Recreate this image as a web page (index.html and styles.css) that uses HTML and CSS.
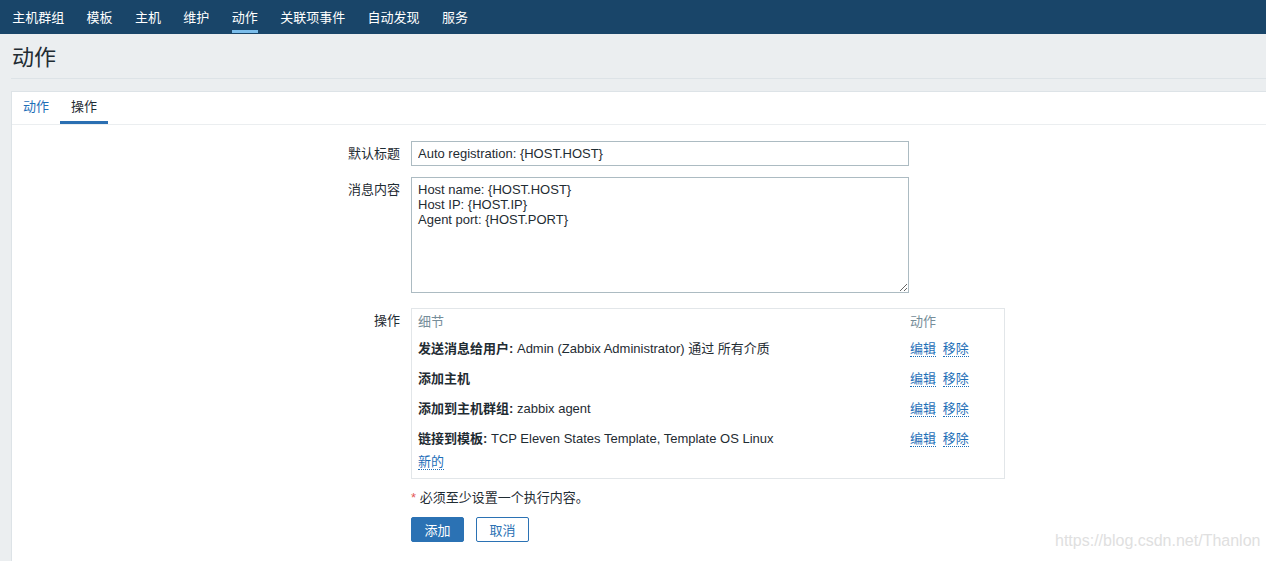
FILE: index.html
```html
<!DOCTYPE html>
<html>
<head>
	<meta charset="utf-8">
	<title>动作</title>
	<link rel="stylesheet" href="styles.css">
</head>
<body>
	<!-- Верхнее меню -->
	<header class="top-nav">
		<ul class="nav-list">
			<li class="nav-item"><span class="nav-text">主机群组</span></li>
			<li class="nav-item"><span class="nav-text">模板</span></li>
			<li class="nav-item"><span class="nav-text">主机</span></li>
			<li class="nav-item"><span class="nav-text">维护</span></li>
			<li class="nav-item"><span class="nav-text nav-active">动作</span></li>
			<li class="nav-item"><span class="nav-text">关联项事件</span></li>
			<li class="nav-item"><span class="nav-text">自动发现</span></li>
			<li class="nav-item"><span class="nav-text">服务</span></li>
		</ul>
	</header>

	<div class="page-title">
		<h1 class="title">动作</h1>
	</div>

	<div class="content">
		<!-- Вкладки -->
		<div class="tabs">
			<a class="tab">动作</a>
			<a class="tab tab-active">操作</a>
		</div>

		<form class="action-form">
			<div class="form-row row-subject">
				<label class="form-label">默认标题</label>
				<div class="form-field">
					<input type="text" class="input-field" value="Auto registration: {HOST.HOST}">
				</div>
			</div>

			<div class="form-row row-message">
				<label class="form-label">消息内容</label>
				<div class="form-field">
					<textarea class="text-field">Host name: {HOST.HOST}
Host IP: {HOST.IP}
Agent port: {HOST.PORT}</textarea>
				</div>
			</div>

			<div class="form-row">
				<label class="form-label">操作</label>
				<div class="form-field">
					<div class="ops-box">
						<div class="ops-row ops-head">
							<span>细节</span>
							<span>动作</span>
						</div>
						<div class="ops-row">
							<span><b>发送消息给用户:</b> Admin (Zabbix Administrator) 通过 所有介质</span>
							<span><a class="link">编辑</a> <a class="link">移除</a></span>
						</div>
						<div class="ops-row">
							<span><b>添加主机</b></span>
							<span><a class="link">编辑</a> <a class="link">移除</a></span>
						</div>
						<div class="ops-row">
							<span><b>添加到主机群组:</b> zabbix agent</span>
							<span><a class="link">编辑</a> <a class="link">移除</a></span>
						</div>
						<div class="ops-row">
							<span><b>链接到模板:</b> TCP Eleven States Template, Template OS Linux</span>
							<span><a class="link">编辑</a> <a class="link">移除</a></span>
						</div>
						<div class="ops-new">
							<a class="link">新的</a>
						</div>
					</div>
				</div>
			</div>

			<div class="form-row row-note">
				<span class="form-label"></span>
				<p class="note"><span class="required">*</span> 必须至少设置一个执行内容。</p>
			</div>

			<div class="form-row">
				<span class="form-label"></span>
				<div class="buttons">
					<button type="button" class="btn btn-main">添加</button>
					<button type="button" class="btn btn-alt">取消</button>
				</div>
			</div>
		</form>
	</div>

	<div class="watermark">https://blog.csdn.net/Thanlon</div>
</body>
</html>
```

FILE: styles.css
```css
* {
	box-sizing: border-box;
}

body {
	margin: 0;
	background-color: #ebeef0;
	color: #1f2c33;
	font-family: "Liberation Sans", "Noto Sans CJK SC", sans-serif;
	font-size: 13px;
	overflow: hidden;
}

/* Top menu */
.top-nav {
	background-color: #194569;
	height: 34px;
}

.nav-list {
	display: flex;
	margin: 0;
	padding: 0 0 0 1px;
	list-style: none;
}

.nav-item {
	padding: 8px 11.2px 0;
	height: 34px;
}

.nav-text {
	display: inline-block;
	color: #ffffff;
	font-size: 13px;
	line-height: 19px;
	padding-bottom: 3px;
	border-bottom: 3px solid transparent;
}

.nav-active {
	border-bottom-color: #7bbdeb;
}

/* Title */
.page-title {
	margin-left: 11px;
	padding: 6px 0 0 1px;
	height: 45px;
	border-bottom: 1px solid #dde3e7;
}

.title {
	margin: 0;
	font-size: 22px;
	font-weight: normal;
	line-height: 36px;
}

/* Content box */
.content {
	margin: 12px 0 0 11px;
	background-color: #ffffff;
	border: 1px solid #dde3e7;
	border-right: none;
	padding-bottom: 15px;
}

.tabs {
	display: flex;
	border-bottom: 1px solid #ebeef0;
}

.tab {
	padding: 0 11px;
	line-height: 29px;
	border-bottom: 3px solid transparent;
	color: #1f6fb8;
	font-size: 13px;
}

.tab-active {
	color: #1f2c33;
	border-bottom-color: #2b6fb2;
}

/* Form */
.action-form {
	padding-top: 16px;
}

.form-row {
	display: grid;
	grid-template-columns: 399px 1fr;
	margin-bottom: 11px;
}

.row-message {
	margin-bottom: 15px;
}

.form-label {
	text-align: right;
	padding-right: 11px;
	line-height: 25px;
}

.input-field, .text-field {
	display: block;
	width: 498px;
	border: 1px solid #acbbc2;
	font-family: "Liberation Sans", "Noto Sans CJK SC", sans-serif;
	font-size: 13px;
	color: #1f2c33;
	padding: 0 6px;
}

.input-field {
	height: 25px;
}

.text-field {
	height: 116px;
	padding: 4px 6px;
	line-height: 15px;
	resize: both;
}

/* Operations table */
.ops-box {
	width: 594px;
	border: 1px solid #e2e6e9;
	padding: 0 6px 4px;
}

.ops-row {
	display: grid;
	grid-template-columns: 492px 1fr;
	height: 30px;
	align-items: center;
}

.ops-head {
	height: 23px;
	color: #768d99;
}

.ops-new {
	height: 22px;
	line-height: 20px;
}

.link {
	color: #1f6fb8;
	border-bottom: 1px dotted #1f6fb8;
	margin-right: 3px;
}

/* Footer of form */
.row-note {
	margin-top: -1px;
	margin-bottom: 10px;
}

.note {
	margin: 0;
	line-height: 18px;
}

.required {
	color: #e45959;
}

.buttons {
	display: flex;
	gap: 12px;
}

.btn {
	height: 25px;
	padding: 0 12.5px;
	border-radius: 2px;
	font-family: "Liberation Sans", "Noto Sans CJK SC", sans-serif;
	font-size: 13px;
	border: 1px solid #2b72b4;
}

.btn-main {
	background-color: #2b72b4;
	color: #ffffff;
}

.btn-alt {
	background-color: #ffffff;
	color: #2b72b4;
}

/* Watermark */
.watermark {
	position: absolute;
	left: 1055px;
	top: 532px;
	font-family: "Liberation Sans", sans-serif;
	font-size: 16px;
	color: #e0e0e0;
}
```
